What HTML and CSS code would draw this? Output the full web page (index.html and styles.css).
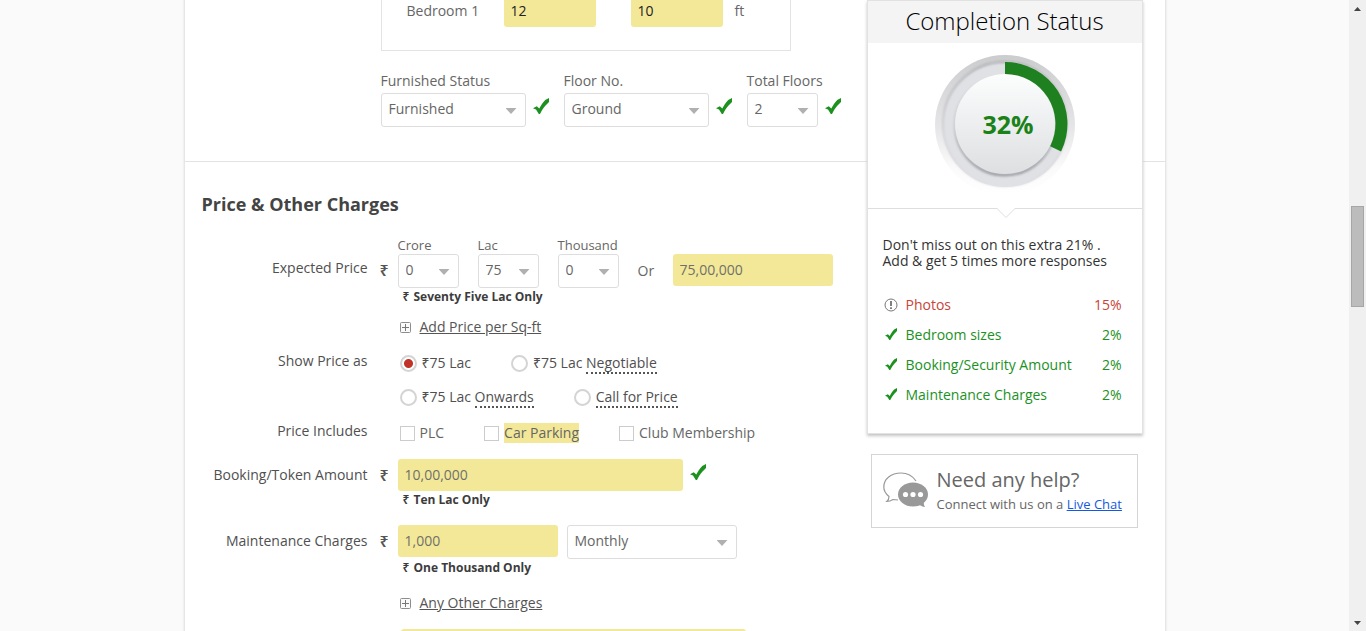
FILE: index.html
```
<!DOCTYPE html>
<html lang="en">
<head>
<meta charset="utf-8">
<title>Post Property</title>
<link rel="stylesheet" href="styles.css">
</head>
<body>
<svg class="defs" aria-hidden="true">
  <symbol id="tick" viewBox="0 0 16 16"><path d="M0 10.200 3.800 8.200 6.300 10.600 C8 7.500 9.800 4.500 12.200 2L16 0V4L12.500 7.500C10.200 10 8.500 12.800 7 16H5.800L3 11.600Z" fill="#1c911f"/></symbol>
  <symbol id="plus" viewBox="0 0 11 11"><rect x=".5" y=".5" width="10" height="10" rx="1" fill="#fafafa" stroke="#8d8d8d"/><path d="M5.500 2v7M2 5.500h7" stroke="#777"/></symbol>
</svg>
<div class="viewport">
  <div class="page">
    <form class="form">
      <section class="property">
        <div class="rooms">
          <label class="rooms-label" for="bed-l">Bedroom 1</label>
          <input class="field dark" id="bed-l" type="text" value="12">
          <input class="field dark" id="bed-w" type="text" value="10" aria-label="Bedroom 1 width">
          <span>ft</span>
        </div>
        <div class="floors">
          <div class="floor">
            <label for="furnished">Furnished Status</label>
            <div class="with-tick"><span class="select w-m"><select id="furnished"><option>Furnished</option></select></span><svg class="tick"><use href="#tick"/></svg></div>
          </div>
          <div class="floor">
            <label for="floor-no">Floor No.</label>
            <div class="with-tick"><span class="select w-m"><select id="floor-no"><option>Ground</option></select></span><svg class="tick"><use href="#tick"/></svg></div>
          </div>
          <div class="floor">
            <label for="total">Total Floors</label>
            <div class="with-tick"><span class="select w-s"><select id="total"><option>2</option></select></span><svg class="tick"><use href="#tick"/></svg></div>
          </div>
        </div>
      </section>
      <section class="price">
        <h2>Price &amp; Other Charges</h2>
        <div class="row expected">
          <label class="name" for="amount">Expected Price</label>
          <span class="rupee">₹</span>
          <div class="body">
            <div class="amounts">
              <div class="unit"><label for="crore">Crore</label><span class="select w-xs"><select id="crore"><option>0</option></select></span></div>
              <div class="unit"><label for="lac">Lac</label><span class="select w-xs"><select id="lac"><option>75</option></select></span></div>
              <div class="unit"><label for="thousand">Thousand</label><span class="select w-xs"><select id="thousand"><option>0</option></select></span></div>
              <span class="or">Or</span>
              <input class="field w-l" id="amount" type="text" value="75,00,000">
            </div>
            <p class="words"><span>₹</span> Seventy Five Lac Only</p>
            <p class="more"><svg class="plus"><use href="#plus"/></svg><a href="#sqft">Add Price per Sq-ft</a></p>
          </div>
        </div>
        <div class="row" role="group" aria-labelledby="show-as">
          <span class="name" id="show-as">Show Price as</span>
          <div class="body options">
            <div class="line">
              <label class="radio"><input type="radio" name="show" checked><span>₹75 Lac</span></label>
              <label class="radio"><input type="radio" name="show"><span>₹75 Lac <u class="hint">Negotiable</u></span></label>
            </div>
            <div class="line">
              <label class="radio"><input type="radio" name="show"><span>₹75 Lac <u class="hint">Onwards</u></span></label>
              <label class="radio"><input type="radio" name="show"><span><u class="hint">Call for Price</u></span></label>
            </div>
          </div>
        </div>
        <div class="row includes" role="group" aria-labelledby="includes">
          <span class="name" id="includes">Price Includes</span>
          <div class="body options">
            <div class="line">
              <label class="check"><input type="checkbox"><span>PLC</span></label>
              <label class="check"><input type="checkbox"><span class="marked">Car Parking</span></label>
              <label class="check"><input type="checkbox"><span>Club Membership</span></label>
            </div>
          </div>
        </div>
        <div class="row charge">
          <label class="name" for="booking">Booking/Token Amount</label>
          <span class="rupee">₹</span>
          <div class="body">
            <div class="with-tick"><input class="field w-xl" id="booking" type="text" value="10,00,000"><svg class="tick"><use href="#tick"/></svg></div>
            <p class="words"><span>₹</span> Ten Lac Only</p>
          </div>
        </div>
        <div class="row charge monthly">
          <label class="name" for="maintenance">Maintenance Charges</label>
          <span class="rupee">₹</span>
          <div class="body">
            <div class="pair"><input class="field w-l" id="maintenance" type="text" value="1,000"><span class="select w-ml"><select aria-label="Maintenance period"><option>Monthly</option></select></span></div>
            <p class="words"><span>₹</span> One Thousand Only</p>
            <p class="more last"><svg class="plus"><use href="#plus"/></svg><a href="#other">Any Other Charges</a></p>
            <input class="field next" type="text" aria-label="Additional details">
          </div>
        </div>
      </section>
    </form>
    <aside class="side">
      <section class="status">
        <h2>Completion Status</h2>
        <div class="gauge">
          <svg width="140" height="140" viewBox="0 0 140 140" role="img" aria-label="32% complete">
            <defs>
              <linearGradient id="rim" x1="0" y1="0" x2="0" y2="1"><stop offset="0" stop-color="#cbccce"/><stop offset=".5" stop-color="#e5e5e7"/><stop offset=".8" stop-color="#fafafa"/><stop offset="1" stop-color="#fff"/></linearGradient>
              <linearGradient id="edge" x1="0" y1="0" x2="0" y2="1"><stop offset="0" stop-color="#aaaaae"/><stop offset=".6" stop-color="#d7d7da"/><stop offset="1" stop-color="#e0e1e5"/></linearGradient>
              <linearGradient id="low" x1="0" y1="0" x2="0" y2="1"><stop offset="0" stop-color="#e0e1e5"/><stop offset=".5" stop-color="#cccdd1"/><stop offset="1" stop-color="#9da0a5"/></linearGradient>
              <linearGradient id="disc" x1="0" y1="0" x2="0" y2="1"><stop offset="0" stop-color="#fcfdfd"/><stop offset="1" stop-color="#dedfe1"/></linearGradient>
              <filter id="soft"><feGaussianBlur stdDeviation="1"/></filter>
            </defs>
            <circle cx="70" cy="70" r="70" fill="url(#rim)"/>
            <circle cx="70" cy="69" r="63" fill="#e0e1e5"/>
            <circle cx="70" cy="69" r="62" fill="none" stroke="url(#edge)" stroke-width="2" filter="url(#soft)"/>
            <circle cx="70" cy="70" r="50" fill="none" stroke="url(#low)" stroke-width="3" filter="url(#soft)"/>
            <circle cx="70" cy="69" r="50" fill="url(#disc)"/>
            <path d="M70 7A62 62 0 0 1 126.100 96.400L115.200 91.300A50 50 0 0 0 70 19Z" fill="#1e801e"/>
            <text x="73" y="79" text-anchor="middle" class="percent">32%</text>
          </svg>
        </div>
        <div class="divider"><svg width="18" height="10" viewBox="0 0 18 10"><path d="M0 0H18L9 9Z" fill="#fff"/><path d="M0 .5 9 9.500 18 .5" fill="none" stroke="#dedede"/></svg></div>
        <p class="tip">Don't miss out on this extra 21% .<br>Add &amp; get 5 times more responses</p>
        <ul class="todo">
          <li class="missing"><svg class="todo-icon" viewBox="0 0 14 14"><circle cx="7" cy="7" r="6" fill="none" stroke="#777" stroke-width="1"/><path d="M7 3v5M7 9.300v1.700" stroke="#555" stroke-width="1.500"/></svg><span>Photos</span><b>15%</b></li>
          <li><svg class="todo-icon"><use href="#tick" x="1" y="0" width="12" height="12"/></svg><span>Bedroom sizes</span><b>2%</b></li>
          <li><svg class="todo-icon"><use href="#tick" x="1" y="0" width="12" height="12"/></svg><span>Booking/Security Amount</span><b>2%</b></li>
          <li><svg class="todo-icon"><use href="#tick" x="1" y="0" width="12" height="12"/></svg><span>Maintenance Charges</span><b>2%</b></li>
        </ul>
      </section>
      <section class="help">
        <svg width="46" height="36" viewBox="0 0 46 36"><path d="M33 9C29 3 24 1 18 1 8 1 .8 7 .8 15 .8 19 3 22 6 24.500 6 27 5 28.500 3.800 29.500 6.500 29.500 8.500 28.500 10 27.500L15 28" fill="none" stroke="#999" stroke-width="1.200"/><ellipse cx="30" cy="22.500" rx="15" ry="12" fill="#999"/><path d="M35 32 C38 34 40 35 42 35 41 33.500 40.500 32 41 29Z" fill="#999"/><circle cx="22.500" cy="22.500" r="2.600" fill="#fff"/><circle cx="30" cy="22.500" r="2.600" fill="#fff"/><circle cx="37.500" cy="22.500" r="2.600" fill="#fff"/></svg>
        <div><h3>Need any help?</h3><p>Connect with us on a <a href="#chat">Live Chat</a></p></div>
      </section>
    </aside>
  </div>
</div>
<div class="scrollbar" aria-hidden="true">
  <svg class="arrow" viewBox="0 0 17 17"><path d="M5 11 8.500 7 12 11Z"/></svg>
  <span class="before"></span><span class="thumb"></span><span class="after"></span>
  <svg class="arrow" viewBox="0 0 17 17"><path d="M5 7 8.500 11 12 7Z"/></svg>
</div>
</body>
</html>
```
FILE: styles.css
```
* { box-sizing: border-box; }
body {
  margin: 0;
  display: flex;
  height: 100vh;
  overflow: hidden;
  background: #fafafa;
  color: #666;
  font: 14px/20px "Open Sans", "Noto Sans", sans-serif;
}
h2, h3, p, ul { margin: 0; padding: 0; }
input, select { font: inherit; color: inherit; margin: 0; }
.defs { position: absolute; width: 0; height: 0; }

.viewport { flex: 1; overflow: hidden; }
.page {
  display: grid;
  grid-template-columns: 1fr 276px 22px;
  align-items: start;
  max-width: 980px;
  min-height: 100%;
  margin: 0 auto;
  background: #fff;
  box-shadow: 0 0 0 1px #e6e6e6, 0 0 2px 1px #e0e0e0;
}
.form { grid-column: 1 / -1; grid-row: 1; margin-top: -5px; }
.side { grid-column: 2; grid-row: 1; }

/* Fields */
.field {
  display: block;
  height: 32px;
  padding: 0 7px 2px;
  border: 0;
  border-radius: 3px;
  background: #f3e898;
  color: #70706a;
}
.field.dark { color: #222; }
.select { position: relative; display: block; }
.select select {
  display: block;
  width: 100%;
  height: 34px;
  padding: 0 7px 2px;
  border: 1px solid #ddd;
  border-radius: 3px;
  background: #fff;
  appearance: none;
}
.select::after {
  content: "";
  position: absolute;
  right: 9px;
  top: 15px;
  width: 11px;
  height: 6px;
  background: #b0b0b0;
  clip-path: polygon(0 0, 100% 0, 50% 100%);
}
.w-xs { width: 61px; }
.w-s { width: 71px; }
.w-m { width: 145px; }
.w-l { width: 160px; }
.w-ml { width: 170px; }
.w-xl { width: 285px; }
.with-tick { display: flex; gap: 7px; }
.tick { width: 16px; height: 16px; margin-top: 5px; }

/* Property details */
.property { padding: 0 0 34px 196px; border-bottom: 1px solid #e3e3e3; }
.rooms {
  display: grid;
  grid-template-columns: 97px 92px 35px 92px 12px auto;
  align-items: center;
  width: 410px;
  padding: 0 24px 23px 25px;
  border: 1px solid #e3e3e3;
  border-top: 0;
}
.rooms .field { width: 92px; }
#bed-w { grid-column: 4; }
.rooms span { grid-column: 6; }
.floors { display: flex; gap: 15px; margin-top: 20px; }
.floor > label { display: block; margin-bottom: 2px; }

/* Price */
.price h2 { padding: 30px 17px 0; font-size: 18px; line-height: 24px; color: #444; }
.row {
  display: grid;
  grid-template-columns: 183px 18px 1fr;
  column-gap: 6px;
  margin-top: 14px;
}
.row.expected { margin-top: 21px; }
.row.includes { margin-top: 12px; }
.name { text-align: right; color: #505050; }
.body { grid-column: 3; }
.rupee { padding-left: 6px; font-size: 16px; font-weight: 600; color: #555; }
.expected > .name { padding-top: 21px; }
.expected > .rupee { padding-top: 23px; }
.charge { margin-top: 14px; }
.charge.monthly { margin-top: 16px; }
.charge > .name { padding-top: 6px; }
.charge > .rupee { padding-top: 6px; }
.amounts { display: flex; align-items: flex-end; }
.unit { width: 80px; font-size: 13px; line-height: 16px; }
.unit label { display: block; margin-bottom: 1px; }
.unit select { font-size: 14px; }
.or { width: 35px; line-height: 34px; }
.amounts .field { margin-bottom: 2px; }
.words { padding-left: 5px; font-size: 12px; line-height: 18px; font-weight: 700; color: #3c3c3c; }
.words span { margin-right: 1px; font-weight: 600; }
.more { display: flex; align-items: center; gap: 9px; margin-top: 11px; padding-left: 2px; }
.more.last { margin-top: 16px; }
.more a { color: #555; }
.plus { width: 11px; height: 11px; }
.options { padding-left: 2px; }
.line { display: flex; gap: 40px; }
.line + .line { margin-top: 10px; }
.radio, .check { display: flex; align-items: center; gap: 5px; height: 24px; }
.radio { color: #505050; }
.radio input {
  appearance: none;
  width: 17px;
  height: 17px;
  border: 2px solid #d4d4d4;
  border-radius: 50%;
  background: #fff;
}
.radio input:checked { background: radial-gradient(circle, #c13328 4px, #fff 5px); }
.check input {
  appearance: none;
  width: 15px;
  height: 15px;
  border: 1px solid #ccc;
  background: #fff;
}
.hint { text-decoration: none; border-bottom: 2px dotted #555; }
.marked { background: #f3e898; }
.pair { display: flex; gap: 9px; }
.field.next { width: 345px; margin: 16px 0 0 3px; }

/* Completion card */
.status {
  background: #fff;
  border: 1px solid #e2e2e2;
  box-shadow: 0 2px 3px #c4c4c4;
  color: #333;
}
.status h2 {
  padding-bottom: 2px;
  background: #f4f4f4;
  color: #000;
  font-size: 24px;
  font-weight: 300;
  line-height: 40px;
  text-align: center;
}
.gauge { display: flex; justify-content: center; padding: 12px 0 13px; }
.percent { font-size: 25px; font-weight: 700; fill: #1a8218; }
.divider { display: flex; justify-content: center; height: 10px; border-top: 1px solid #dedede; padding-left: 3px; }
.divider svg { margin-top: -1px; flex: none; }
.tip { padding: 19px 15px 0; line-height: 16px; }
.todo { padding: 21px 20px 23px 16px; list-style: none; }
.todo li { display: grid; grid-template-columns: 14px 1fr auto; column-gap: 8px; align-items: center; height: 30px; color: #1c911f; }
.todo .missing { color: #c8443a; }
.todo b { font-weight: 400; }
.todo-icon { width: 14px; height: 14px; }

/* Help box */
.help {
  display: flex;
  align-items: center;
  gap: 8px;
  height: 74px;
  margin: 20px 5px 0 4px;
  padding: 0 0 2px 11px;
  border: 1px solid #d5d5d5;
  background: #fff;
}
.help h3 { font-size: 20px; line-height: 28px; font-weight: 400; }
.help p { font-size: 13px; white-space: nowrap; }
.help a { color: #1459e0; }

/* Scrollbar */
.scrollbar { display: flex; flex-direction: column; width: 17px; background: #f0f0f0; }
.arrow { width: 17px; height: 17px; fill: #444; }
.before { flex: 190; }
.thumb { flex: 99; margin: 0 2px; border: 1px solid #a6a6a6; background: #bcbcbc; }
.after { flex: 308; }
```
